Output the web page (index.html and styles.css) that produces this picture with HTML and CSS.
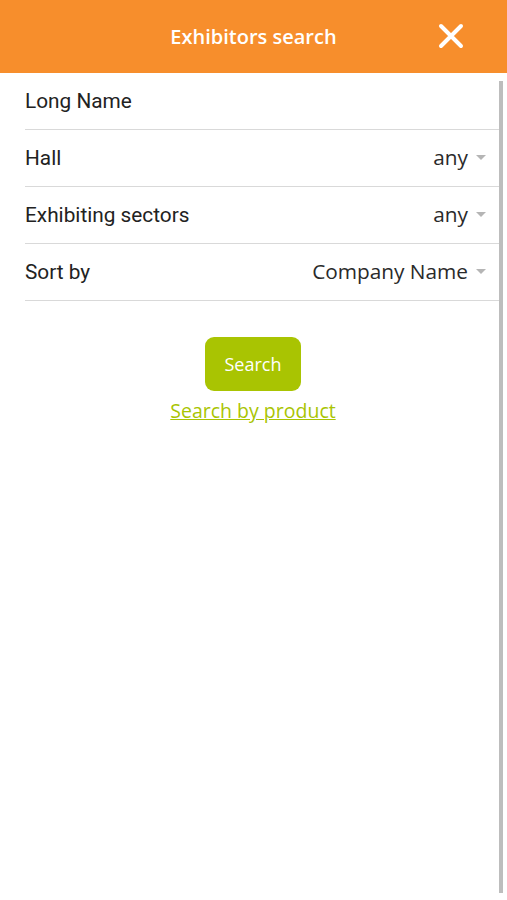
FILE: index.html
```html
<!DOCTYPE html>
<html lang="en">
<head>
  <meta charset="UTF-8" />
  <meta name="viewport" content="width=device-width, initial-scale=1.0"/>
  <title>Exhibitors search</title>
  <link rel="stylesheet" href="styles.css">
</head>
<body>
  <div class="header">
    <span class="title">Exhibitors search</span>
    <button class="close" aria-label="Close">
      <svg width="26" height="26" viewBox="0 0 26 26">
        <path d="M3 3 L23 23 M23 3 L3 23" stroke="#fff" stroke-width="4" stroke-linecap="round"/>
      </svg>
    </button>
  </div>

  <div class="content">
    <form class="search-form">
      <div class="row">
        <span class="label">Long Name</span>
      </div>
      <div class="row">
        <span class="label">Hall</span>
        <span class="value">any <i class="caret"></i></span>
      </div>
      <div class="row">
        <span class="label">Exhibiting sectors</span>
        <span class="value">any <i class="caret"></i></span>
      </div>
      <div class="row">
        <span class="label">Sort by</span>
        <span class="value">Company Name <i class="caret"></i></span>
      </div>

      <div class="actions">
        <button type="submit" class="btn-search">Search</button>
        <a href="#" class="link">Search by product</a>
      </div>
    </form>
    <div class="scrollbar"></div>
  </div>
</body>
</html>
```

FILE: styles.css
```css
body {
  margin: 0;
  font-family: Roboto, Arial, sans-serif;
  background: #fff;
}
.header {
  height: 73px;
  background-color: #f78e2c;
  display: flex;
  align-items: center;
  justify-content: center;
  position: relative;
}
.title {
  font-family: "Open Sans", Arial, sans-serif;
  font-weight: 600;
  font-size: 20px;
  color: #fff;
}
.close {
  position: absolute;
  right: 43px;
  top: 23px;
  background: none;
  border: none;
  padding: 0;
  cursor: pointer;
  display: flex;
}
.content {
  position: relative;
  height: 827px;
}
.search-form {
  padding: 0 7px 0 25px;
}
.row {
  height: 56px;
  border-bottom: 1px solid #d9d9d9;
  display: flex;
  align-items: center;
  justify-content: space-between;
  font-size: 20.8px;
  color: #222;
  padding-right: 14px;
}
.value {
  display: flex;
  align-items: center;
  gap: 8px;
  font-family: "Open Sans", Arial, sans-serif;
  font-size: 20.8px;
  color: #2a2a2a;
  margin-top: -2px;
}
.caret {
  width: 0;
  height: 0;
  border-left: 5px solid transparent;
  border-right: 5px solid transparent;
  border-top: 5px solid #b5b5b5;
}
.actions {
  display: flex;
  flex-direction: column;
  align-items: center;
  padding-top: 36px;
  margin-right: 19px;
}
.btn-search {
  width: 96px;
  height: 54px;
  border: none;
  border-radius: 9px;
  background-color: #a9c402;
  color: #fff;
  font-family: "Open Sans", Arial, sans-serif;
  font-size: 18px;
  cursor: pointer;
}
.link {
  margin-top: 6px;
  font-family: "Open Sans", Arial, sans-serif;
  font-size: 19.5px;
  color: #a9c402;
  text-decoration: underline;
}
.scrollbar {
  position: absolute;
  right: 4px;
  top: 8px;
  width: 4px;
  height: 812px;
  background: #bdbdbd;
}
```
